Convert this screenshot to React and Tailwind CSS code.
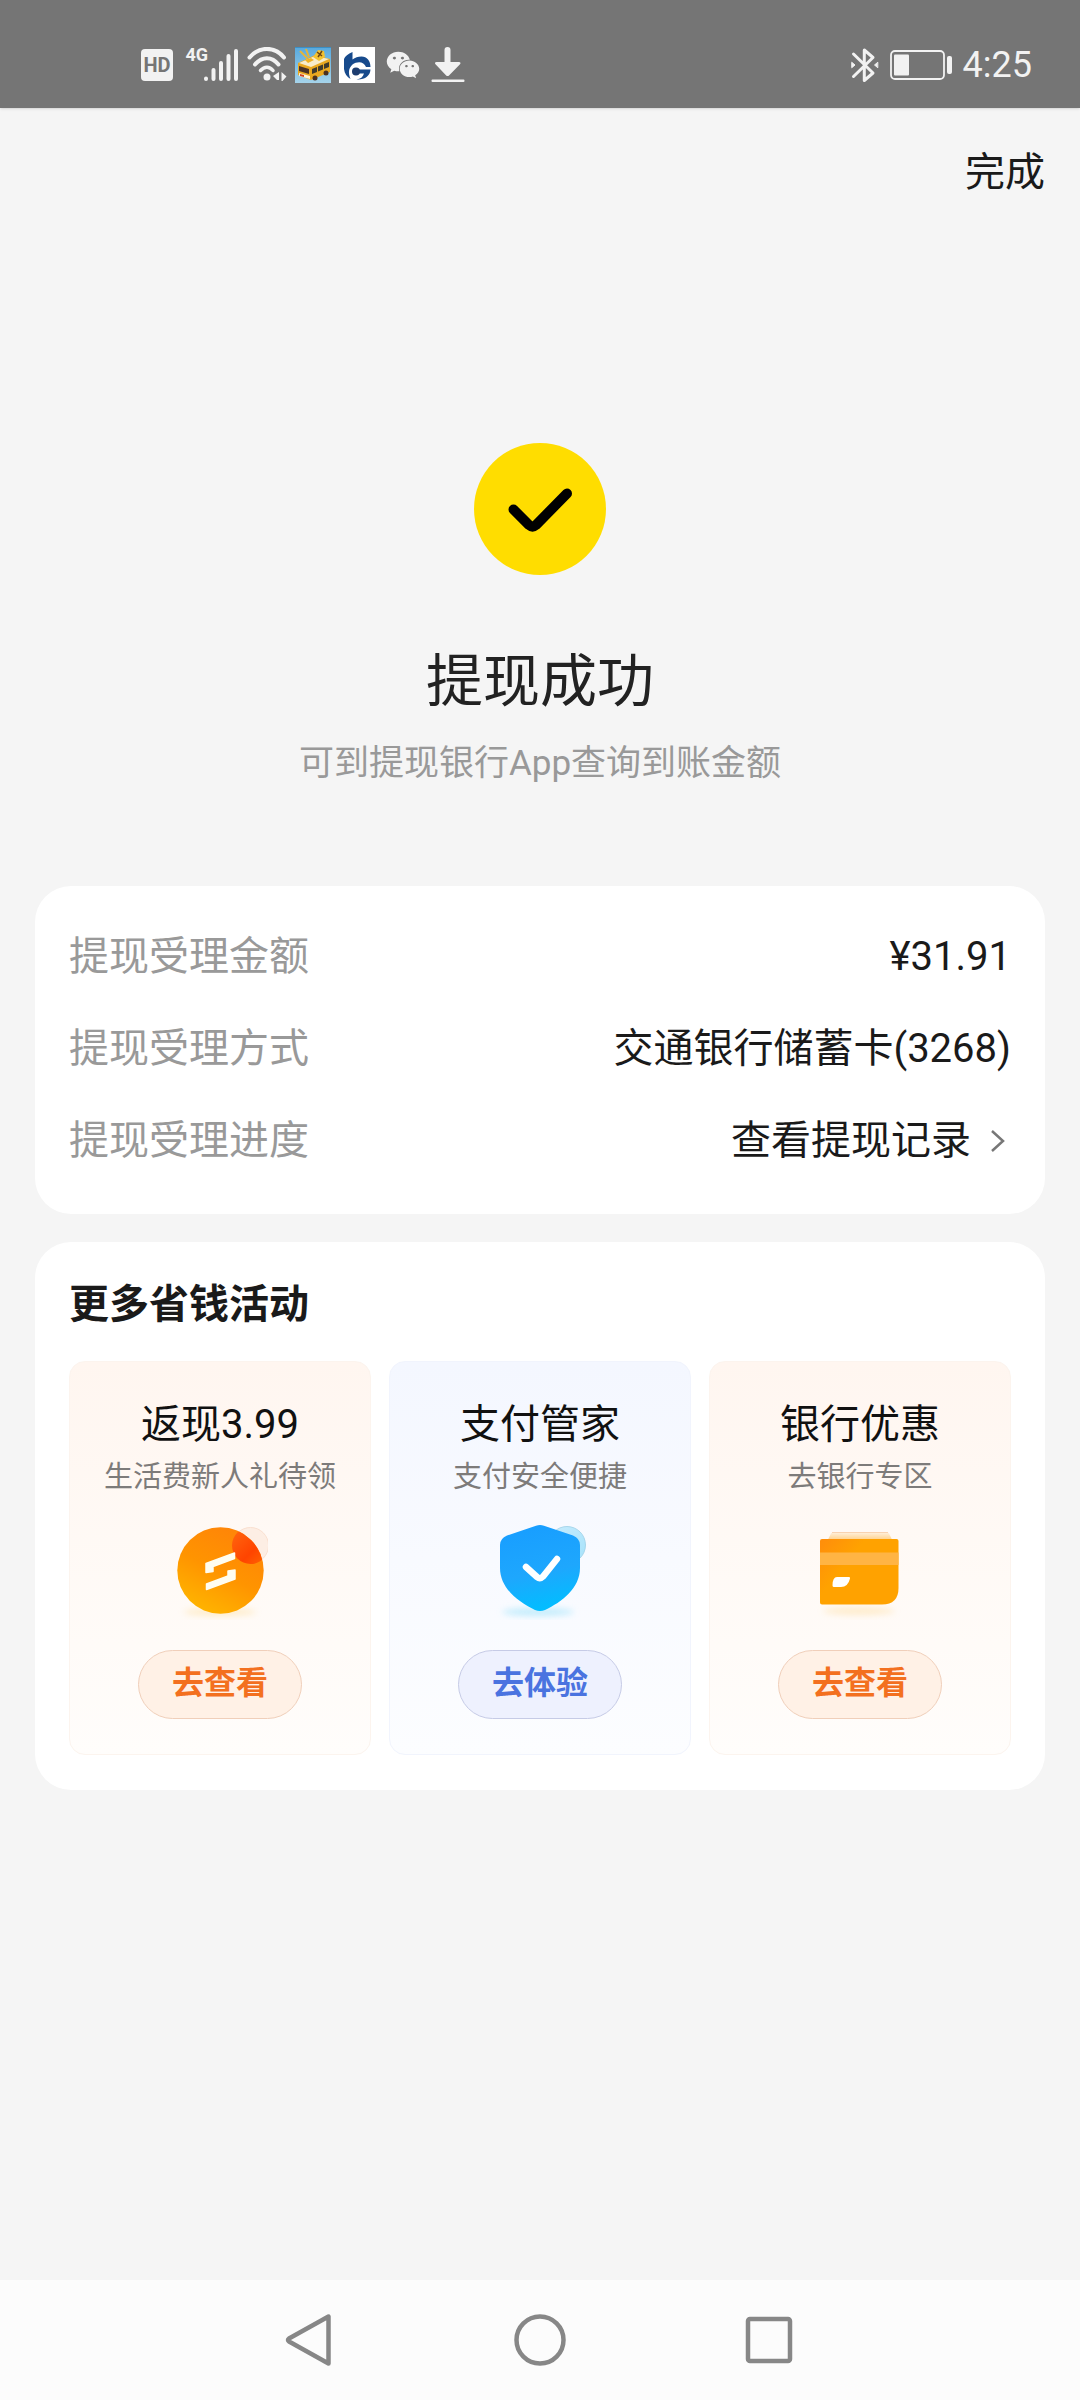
import React from "react";
import { FaWeixin } from "react-icons/fa";

const StatusBar = () => (
  <div className="flex h-[108px] shrink-0 items-center justify-between bg-[#757575] pt-[22px] pr-[48px] pl-[141px] text-[#f2f2f2] shadow">
    <div className="flex items-center gap-2">
      <span className="flex h-8 w-8 items-center justify-center rounded-[4px] bg-[#f2f2f2] text-[20px] leading-none font-bold text-[#757575]">
        HD
      </span>
      <div className="flex h-9 w-[58px] items-start justify-end">
        <span className="text-[18px] leading-4 font-bold">4G</span>
        <svg width="35" height="36" viewBox="0 0 35 36" className="-ml-1" stroke="currentColor" strokeWidth="4" strokeLinecap="round">
          <path d="M2 31.600v.4M9.500 23v9M17 16v16M24.500 9v23M32 4v28" />
        </svg>
      </div>
      <svg width="40" height="36" viewBox="0 0 40 36" fill="none" stroke="currentColor" strokeWidth="4" strokeLinecap="round">
        <path d="M2.500 10.500C12-1 28-1 37 10.500" />
        <path d="M8 17.500C15 9 25 9 31.500 17.500" />
        <path d="M13.500 23.500C17.500 19 22.500 19 26 23.500" strokeWidth="3.500" />
        <circle cx="20" cy="30" r="3.500" fill="currentColor" stroke="none" />
        <path d="M32 25v8h-2l-4-4zM34.500 25l5 4.500-4 4.500h-1z" fill="currentColor" stroke="none" />
      </svg>
      <VanIcon />
      <BankIcon />
      <FaWeixin className="mx-[3px] h-9 w-[34px]" />
      <svg width="34" height="36" viewBox="0 0 34 36" fill="currentColor">
        <path d="M13.500 3a3 3 0 0 1 6 0V15h8.500c1.500 0 2 1.200 1 2.300L18 28.500c-.8.800-2 .8-2.800 0L4.500 17.300C3.500 16.200 4 15 5.500 15h8z" />
        <rect x="0.500" y="32.500" width="33" height="2.500" rx="1" />
      </svg>
    </div>
    <div className="flex items-center gap-[11px]">
      <svg width="28" height="36" viewBox="0 0 28 36" fill="none" stroke="currentColor" strokeWidth="3" strokeLinejoin="round" strokeLinecap="round">
        <path d="M2.500 7L22 26l-8.700 7.500V3L22 10.500 2.500 29.500" />
        <path d="M1 15.500l3 2.500-3 2.500zM26.500 15.500l-3 2.500 3 2.500z" fill="currentColor" strokeWidth="1" />
      </svg>
      <svg width="62" height="30" viewBox="0 0 62 30" fill="none">
        <rect x="1" y="1" width="53" height="28" rx="4" stroke="currentColor" strokeWidth="1.800" />
        <rect x="4" y="4.500" width="15" height="21" rx="1" fill="currentColor" />
        <rect x="57" y="6" width="5" height="18" rx="2" fill="currentColor" />
      </svg>
      <span className="text-[36px] leading-9">4:25</span>
    </div>
  </div>
);

const VanIcon = () => (
  <svg width="36" height="36" viewBox="0 0 36 36">
    <defs>
      <linearGradient id="vanSky" x1="0" y1="0" x2="0" y2="1">
        <stop offset="0" stopColor="#57a9de" />
        <stop offset="1" stopColor="#a5d3ea" />
      </linearGradient>
    </defs>
    <rect width="36" height="36" fill="url(#vanSky)" />
    <path d="M0 0h36v1H0z" fill="#3c8fc4" />
    <path d="M5 4l8 8M11 2l3 8" stroke="#e3b53a" strokeWidth="2" />
    <path d="M3 16L20 8l15 4v13L16 33 3 28z" fill="#e9a820" />
    <path d="M4 16L20 9l14 3-18 8z" fill="#f7eccb" />
    <path d="M18 10l5-7 6 1 1 6-6 4z" fill="#f2c230" />
    <path d="M22 5l5 4M27 4l-4 6" stroke="#6b4513" strokeWidth="1.500" />
    <path d="M10 13l6-2 3 2-6 3z" fill="#efb122" />
    <path d="M4 19l10 3v5L4 24z" fill="#4a3226" />
    <path d="M17 22l5-2v5l-5 2zM23 19.500l5-2v5l-5 2zM29 17l5-2v5l-5 2z" fill="#3f3a2c" />
    <path d="M4 26l11 3v3L4 29z" fill="#fff2d6" />
    <path d="M5 27l4 1v2l-4-1z" fill="#d2421f" />
    <circle cx="20" cy="31" r="2.500" fill="#4a3020" />
    <circle cx="31" cy="26" r="2.500" fill="#4a3020" />
  </svg>
);

const BankIcon = () => (
  <svg width="36" height="36" viewBox="0 0 36 36">
    <rect width="36" height="36" fill="#fff" />
    <path
      d="M13.500 5C9 7 6 9 5 12v10c.5 4.500 3 8 6.500 10C9 26 9.500 21 13.500 17.500 18 14 25 14 27 20h4.500C31.500 14 28 9.500 22.500 9.500c-3.500 0-6.500 1-9 3z"
      fill="#174a8c"
    />
    <path d="M17 22.500h14.500C31 29 26 33 17.500 32.500c4-.5 6.500-2.500 7.500-6H17z" fill="#174a8c" />
    <circle cx="17" cy="24.500" r="4" fill="#1d3d70" />
  </svg>
);

const CoinIcon = () => (
  <svg width="96" height="100" viewBox="0 0 96 100">
    <defs>
      <linearGradient id="coin" x1="0.200" y1="1" x2="0.700" y2="0">
        <stop offset="0" stopColor="#ffb800" />
        <stop offset="0.500" stopColor="#ff9400" />
        <stop offset="1" stopColor="#ff8408" />
      </linearGradient>
      <linearGradient id="coinDot" x1="0" y1="0" x2="1" y2="1">
        <stop offset="0" stopColor="#ff6a10" />
        <stop offset="0.600" stopColor="#ff4400" />
        <stop offset="1" stopColor="#ff6a00" />
      </linearGradient>
      <clipPath id="coinClip">
        <circle cx="48.500" cy="50.500" r="43.200" />
      </clipPath>
      <filter id="coinBlur" x="-20%" y="-100%" width="140%" height="300%">
        <feGaussianBlur stdDeviation="3" />
      </filter>
    </defs>
    <ellipse cx="48" cy="92" rx="36" ry="4" fill="#ffdf9e" opacity="0.500" filter="url(#coinBlur)" />
    <circle cx="78.500" cy="25.500" r="18" fill="#fdeee4" stroke="#fae0d0" />
    <circle cx="48.500" cy="50.500" r="43.200" fill="url(#coin)" />
    <circle cx="78.500" cy="25.500" r="18.500" fill="url(#coinDot)" clipPath="url(#coinClip)" />
    <g fill="#fffdf0" stroke="#fffdf0" strokeWidth="1.500" strokeLinejoin="round">
      <path d="M62.500 33L34 43.500v9l7-1V46.500L62.500 38.500z" />
      <path d="M34.500 69.500L63 59v-9l-7 1v5L34.500 64z" />
    </g>
  </svg>
);

const ShieldIcon = () => (
  <svg width="96" height="100" viewBox="0 0 96 100">
    <defs>
      <linearGradient id="shield" x1="0.400" y1="0" x2="0.600" y2="1">
        <stop offset="0" stopColor="#189eff" />
        <stop offset="0.550" stopColor="#1ea7fd" />
        <stop offset="1" stopColor="#00bfff" />
      </linearGradient>
      <linearGradient id="shieldDot" x1="0" y1="0" x2="1" y2="1">
        <stop offset="0" stopColor="#c9ecfd" />
        <stop offset="1" stopColor="#a5e2fb" />
      </linearGradient>
      <filter id="shieldBlur" x="-20%" y="-100%" width="140%" height="300%">
        <feGaussianBlur stdDeviation="3" />
      </filter>
    </defs>
    <ellipse cx="46" cy="92" rx="36" ry="4" fill="#9fe3fb" opacity="0.600" filter="url(#shieldBlur)" />
    <circle cx="75" cy="25" r="18.500" fill="url(#shieldDot)" stroke="#9ccfe6" strokeWidth="0.800" />
    <path
      d="M44 5.800Q48 4 52 5.800L81 15.500Q88 18.500 88 25V48C88 68 70 82 53 90Q48 92 43 90C26 82 8 68 8 48V25Q8 18.500 15 15.500Z"
      fill="url(#shield)"
    />
    <path d="M34 47L45 57q3 2.500 6-.5L65 39" fill="none" stroke="#fff" strokeWidth="6.500" strokeLinecap="round" />
  </svg>
);

const CardIcon = () => (
  <svg width="96" height="100" viewBox="0 0 96 100">
    <defs>
      <linearGradient id="card" x1="0" y1="0.100" x2="0.600" y2="0.500">
        <stop offset="0" stopColor="#ff8f0a" />
        <stop offset="0.600" stopColor="#ffa200" />
        <stop offset="1" stopColor="#ffa200" />
      </linearGradient>
      <linearGradient id="cardTop" x1="0" y1="0" x2="0" y2="1">
        <stop offset="0" stopColor="#fff0dc" />
        <stop offset="1" stopColor="#ffd38f" />
      </linearGradient>
      <filter id="cardBlur" x="-20%" y="-100%" width="140%" height="300%">
        <feGaussianBlur stdDeviation="3" />
      </filter>
    </defs>
    <ellipse cx="47" cy="91" rx="36" ry="4" fill="#ffe3b0" opacity="0.600" filter="url(#cardBlur)" />
    <path d="M16 19.500l3-6q.5-1 2-1h54q1.500 0 2 1l3 6z" fill="url(#cardTop)" />
    <path d="M20 12.500h56" stroke="#f6c9a0" strokeWidth="0.800" />
    <path d="M10 19h74.500q2 0 2 2v47q0 16.500-16.500 16.500H10q-2 0-2-2V21q0-2 2-2z" fill="url(#card)" />
    <path d="M8 32.500h78.500V45H8z" fill="#ffb444" />
    <path d="M25 57h12q1.500 0 1 1.500-2 8.500-9 8.500h-7q-1.500 0-1.500-1.500 0-8.500 4.500-8.500z" fill="#fff" />
  </svg>
);

const activities = [
  { title: "返现3.99", desc: "生活费新人礼待领", action: "去查看", tone: "orange", icon: CoinIcon },
  { title: "支付管家", desc: "支付安全便捷", action: "去体验", tone: "blue", icon: ShieldIcon },
  { title: "银行优惠", desc: "去银行专区", action: "去查看", tone: "orange", icon: CardIcon },
];

const tones = {
  orange: {
    tile: "border-[#fcf4ee] from-[#fff6f0] to-[#fffdfb]",
    button: "border-[#f0cfba] bg-[#fff1e6] text-[#f3701f]",
  },
  blue: {
    tile: "border-[#f1f4fd] from-[#f4f7ff] to-[#fcfdff]",
    button: "border-[#c6cbe6] bg-[#eef1fe] text-[#4a73e0]",
  },
};

const ActivityTile = ({ title, desc, action, tone, icon: Icon }) => (
  <div className={`flex flex-1 flex-col items-center rounded-2xl border bg-linear-to-b pt-9 pb-[35px] ${tones[tone].tile}`}>
    <h3 className="text-[40px] leading-[54px] text-[#111]">{title}</h3>
    <p className="mt-1 text-[29px] leading-[42px] text-[#7d7b7a]">{desc}</p>
    <div className="mt-[22px]">
      <Icon />
    </div>
    <button
      type="button"
      className={`mt-[30px] flex h-[69px] w-[164px] items-center justify-center rounded-full border pb-1 text-[32px] leading-none font-bold ${tones[tone].button}`}
    >
      {action}
    </button>
  </div>
);

const NavBar = () => (
  <nav className="flex h-[120px] shrink-0 items-center justify-center gap-[178px] bg-[#fcfcfc] text-[#878787]">
    <button type="button" aria-label="返回">
      <svg width="52" height="52" viewBox="0 0 52 52" fill="none" stroke="currentColor" strokeWidth="4.500" strokeLinejoin="round">
        <path d="M44.500 2.500v47L5 27.500q-2-1.500 0-3z" />
      </svg>
    </button>
    <button type="button" aria-label="主页">
      <svg width="52" height="52" viewBox="0 0 52 52" fill="none" stroke="currentColor" strokeWidth="4.500">
        <circle cx="26" cy="26" r="23.500" />
      </svg>
    </button>
    <button type="button" aria-label="最近任务">
      <svg width="52" height="52" viewBox="0 0 52 52" fill="none" stroke="currentColor" strokeWidth="4.500">
        <rect x="4" y="5" width="42" height="42" rx="2" />
      </svg>
    </button>
  </nav>
);

const App = () => {
  return (
    <div className="flex min-h-screen flex-col bg-[#f5f5f5] font-[Roboto,'Noto_Sans_CJK_SC',sans-serif] text-[#1a1a1a]">
      <StatusBar />

      <header className="flex justify-end px-[35px] pt-[38px] pb-[34px]">
        <button type="button" className="text-[40px] leading-[54px]">
          完成
        </button>
      </header>

      <main className="flex flex-1 flex-col px-[35px] pt-[209px]">
        {/* Result */}
        <section className="flex flex-col items-center">
          <svg width="132" height="132" viewBox="0 0 132 132" fill="none">
            <circle cx="66" cy="66" r="66" fill="#ffdd00" />
            <path d="M39.500 66.500L55 82q3.500 3 7 0L93 50.500" stroke="#000" strokeWidth="10" strokeLinecap="round" />
          </svg>
          <h1 className="mt-[65px] text-[57px] leading-[84px] text-[#222]">提现成功</h1>
          <p className="mt-4 text-[35px] leading-[48px] text-[#999]">可到提现银行App查询到账金额</p>
        </section>

        {/* Withdrawal details */}
        <dl className="mt-[98px] rounded-[36px] bg-white px-[34px] pt-[25px] pb-[27px] text-[40px] leading-[92px]">
          <div className="flex justify-between">
            <dt className="text-[#999]">提现受理金额</dt>
            <dd>¥31.91</dd>
          </div>
          <div className="flex justify-between">
            <dt className="text-[#999]">提现受理方式</dt>
            <dd>交通银行储蓄卡(3268)</dd>
          </div>
          <div className="flex justify-between">
            <dt className="text-[#999]">提现受理进度</dt>
            <dd>
              <a href="#records" className="flex items-center gap-5">
                查看提现记录
                <svg width="20" height="24" viewBox="0 0 20 24" fill="none" stroke="#777" strokeWidth="2.500">
                  <path d="M1 2l11 10L1 22" />
                </svg>
              </a>
            </dd>
          </div>
        </dl>

        {/* More activities */}
        <section className="mt-7 rounded-[36px] bg-white px-[34px] pt-[37px] pb-[35px]">
          <h2 className="text-[40px] leading-[52px] font-bold">更多省钱活动</h2>
          <div className="mt-[30px] flex gap-[18px]">
            {activities.map((item) => (
              <ActivityTile key={item.title} {...item} />
            ))}
          </div>
        </section>
      </main>

      <NavBar />
    </div>
  );
};

export default App;
